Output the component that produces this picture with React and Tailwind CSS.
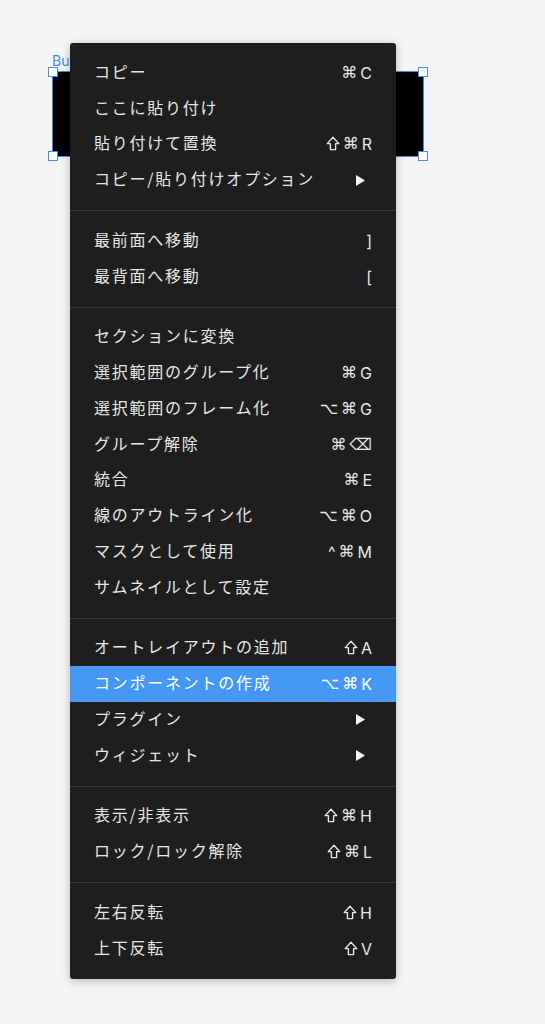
const groups = [
  [
    { label: 'コピー', keys: ['⌘', 'C'] },
    { label: 'ここに貼り付け' },
    { label: '貼り付けて置換', keys: ['⇧', '⌘', 'R'] },
    { label: 'コピー/貼り付けオプション', submenu: true },
  ],
  [
    { label: '最前面へ移動', keys: [']'] },
    { label: '最背面へ移動', keys: ['['] },
  ],
  [
    { label: 'セクションに変換' },
    { label: '選択範囲のグループ化', keys: ['⌘', 'G'] },
    { label: '選択範囲のフレーム化', keys: ['⌥', '⌘', 'G'] },
    { label: 'グループ解除', keys: ['⌘', '⌫'] },
    { label: '統合', keys: ['⌘', 'E'] },
    { label: '線のアウトライン化', keys: ['⌥', '⌘', 'O'] },
    { label: 'マスクとして使用', keys: ['^', '⌘', 'M'] },
    { label: 'サムネイルとして設定' },
  ],
  [
    { label: 'オートレイアウトの追加', keys: ['⇧', 'A'] },
    { label: 'コンポーネントの作成', keys: ['⌥', '⌘', 'K'], active: true },
    { label: 'プラグイン', submenu: true },
    { label: 'ウィジェット', submenu: true },
  ],
  [
    { label: '表示/非表示', keys: ['⇧', '⌘', 'H'] },
    { label: 'ロック/ロック解除', keys: ['⇧', '⌘', 'L'] },
  ],
  [
    { label: '左右反転', keys: ['⇧', 'H'] },
    { label: '上下反転', keys: ['⇧', 'V'] },
  ],
];

const symbolKeys = ['⌘', '⌥', '⌫'];

// shift key glyph is too small in the installed fonts, so draw it
function ShiftIcon() {
  return (
    <svg width="14" height="15" viewBox="0 0 14 15" className="mb-[1px]">
      <path
        d="M7 1.2 L12.8 7.6 H9.6 V13.6 H4.4 V7.6 H1.2 Z"
        fill="none"
        stroke="currentColor"
        strokeWidth="1.4"
        strokeLinejoin="round"
      />
    </svg>
  );
}

function Shortcut({ keys }) {
  return (
    <div className="flex items-center gap-[3px]">
      {keys.map((key, i) =>
        key === '⇧' ? (
          <ShiftIcon key={i} />
        ) : (
          <span
            key={i}
            className={
              symbolKeys.includes(key)
                ? "font-['DejaVu_Sans',sans-serif] text-[16px]"
                : "font-['Inter','Liberation_Sans',sans-serif] text-[16px]"
            }
          >
            {key}
          </span>
        ),
      )}
    </div>
  );
}

function SubmenuArrow() {
  return (
    <svg width="9" height="11" viewBox="0 0 9 11" className="mr-[7px]">
      <path d="M0 0 L9 5.5 L0 11 Z" fill="#f2f2f2" />
    </svg>
  );
}

function MenuRow({ item }) {
  return (
    <div
      className={
        'flex h-[35.75px] items-center justify-between pl-6 pr-6 ' +
        (item.active ? 'bg-[#4597f6] text-white' : 'text-[#e6e6e6]')
      }
    >
      <span className="mb-[4px] text-[16px] tracking-[1.75px]">{item.label}</span>
      {item.keys ? <Shortcut keys={item.keys} /> : null}
      {item.submenu ? <SubmenuArrow /> : null}
    </div>
  );
}

function ContextMenu() {
  return (
    <div className="absolute left-[70px] top-[43px] w-[326px] rounded-[3px] bg-[#1e1e1e] shadow-[0_2px_10px_rgba(0,0,0,0.25)]">
      {groups.map((group, gi) => (
        <div key={gi} className={'py-3 ' + (gi > 0 ? 'border-t border-[#383838]' : '')}>
          {group.map((item) => (
            <MenuRow key={item.label} item={item} />
          ))}
        </div>
      ))}
    </div>
  );
}

function Handle({ className }) {
  return <div className={'absolute h-[10px] w-[10px] border border-[#3f8cf0] bg-white ' + className} />;
}

export default function App() {
  return (
    <div className="relative h-[1024px] w-[545px] overflow-hidden bg-[#f5f5f5] font-['Noto_Sans_CJK_JP','Noto_Sans',sans-serif]">
      <span className="absolute left-[52px] top-[50px] font-['Inter','Liberation_Sans',sans-serif] text-[14px] text-[#3f8cf0]">
        Button
      </span>
      <div className="absolute left-[52px] top-[71px] h-[86px] w-[372px] border border-[#3f8cf0] bg-black">
        <Handle className="-left-[5px] -top-[5px]" />
        <Handle className="-right-[5px] -top-[5px]" />
        <Handle className="-bottom-[5px] -left-[5px]" />
        <Handle className="-bottom-[5px] -right-[5px]" />
      </div>
      <ContextMenu />
    </div>
  );
}
